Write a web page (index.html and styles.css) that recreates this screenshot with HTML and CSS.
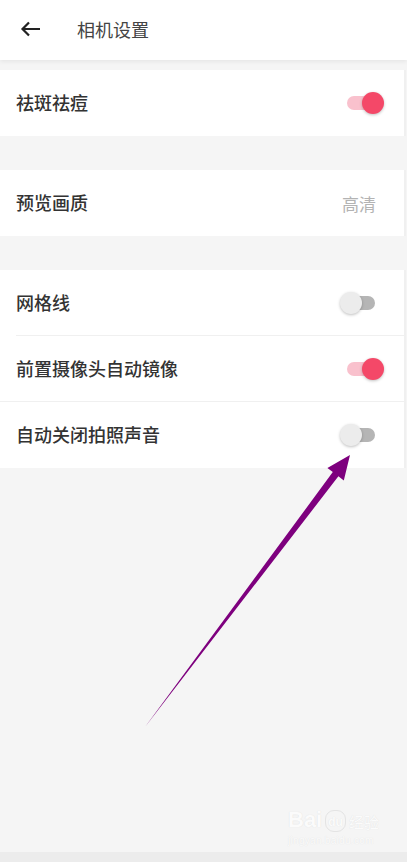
FILE: index.html
```html
<!DOCTYPE html>
<html lang="zh-CN">
<head>
    <meta charset="UTF-8">
    <meta name="viewport" content="width=device-width, initial-scale=1.0">
    <title>相机设置</title>
    <link rel="stylesheet" href="styles.css">
</head>
<body>
    <div class="page">
        <header class="top-bar">
            <svg class="back" width="22" height="22" viewBox="0 0 22 22">
                <path d="M20 11H3M9 4.5L2.5 11 9 17.5" fill="none" stroke="#222" stroke-width="2.2"/>
            </svg>
            <span class="title">相机设置</span>
        </header>

        <section class="group first">
            <div class="row">
                <span class="label">祛斑祛痘</span>
                <span class="switch on"><span class="track"></span><span class="knob"></span></span>
            </div>
        </section>

        <section class="group">
            <div class="row">
                <span class="label">预览画质</span>
                <span class="value">高清</span>
            </div>
        </section>

        <section class="group">
            <div class="row inset-line">
                <span class="label">网格线</span>
                <span class="switch"><span class="track"></span><span class="knob"></span></span>
            </div>
            <div class="row full-line">
                <span class="label">前置摄像头自动镜像</span>
                <span class="switch on"><span class="track"></span><span class="knob"></span></span>
            </div>
            <div class="row">
                <span class="label">自动关闭拍照声音</span>
                <span class="switch"><span class="track"></span><span class="knob"></span></span>
            </div>
        </section>

        <div class="spacer"></div>
        <div class="bottom-band"></div>

        <!-- annotation arrow drawn over the page -->
        <svg class="pointer" width="407" height="862" viewBox="0 0 407 862">
            <polygon points="145,727 332.8,472.1 327.4,468 350,455 343.8,480.4 338.4,476.3" fill="#7e007e"/>
        </svg>

        <div class="watermark">
            <div class="wm-top">
                <span class="wm-bai">Bai</span>
                <span class="wm-paw">du</span>
                <span class="wm-cn">经验</span>
            </div>
            <div class="wm-url">jingyan.baidu.com</div>
        </div>
    </div>
</body>
</html>
```

FILE: styles.css
```css
body {
    margin: 0;
    background-color: #f5f5f5;
    font-family: "Noto Sans CJK SC", "Noto Sans", sans-serif;
    color: #333;
}

.page {
    position: relative;
    width: 407px;
    height: 862px;
    display: flex;
    flex-direction: column;
    overflow: hidden;
}

.top-bar {
    height: 60px;
    flex-shrink: 0;
    background-color: #fff;
    display: flex;
    align-items: center;
    padding-left: 20px;
    box-shadow: 0 2px 4px rgba(0, 0, 0, 0.06);
    position: relative;
    z-index: 1;
}

.top-bar .back {
    margin-top: -3px;
}

.top-bar .title {
    margin-left: 35px;
    margin-top: -3px;
    font-size: 18px;
    color: #444;
}

.group {
    background-color: #fff;
    margin-top: 34px;
    border-right: 2px solid #f0f0f0;
    margin-right: 1px;
}

.group.first {
    margin-top: 10px;
}

.row {
    height: 66px;
    display: flex;
    align-items: center;
    justify-content: space-between;
    padding: 0 20px 0 16px;
    box-sizing: border-box;
    position: relative;
}

.row.inset-line::after,
.row.full-line::after {
    content: "";
    position: absolute;
    bottom: 0;
    right: 0;
    height: 1px;
    background-color: #f0f0f0;
}

.row.inset-line::after {
    left: 16px;
}

.row.full-line::after {
    left: 0;
}

.label {
    font-size: 18px;
    font-weight: 500;
    color: #333;
    margin-top: -2px;
}

.value {
    font-size: 17px;
    color: #b3b3b3;
    margin-right: 8px;
}

.switch {
    position: relative;
    width: 44px;
    height: 24px;
}

.switch .track {
    position: absolute;
    left: 3px;
    right: 9px;
    top: 5px;
    height: 14px;
    border-radius: 7px;
    background-color: #b5b5b5;
}

.switch .knob {
    position: absolute;
    left: 0;
    top: 1px;
    width: 22px;
    height: 22px;
    border-radius: 50%;
    background-color: #ececec;
    box-shadow: 0 1px 3px rgba(0, 0, 0, 0.25);
}

.switch.on .track {
    left: 7px;
    right: 3px;
    background-color: #f9c1cd;
}

.switch.on .knob {
    left: auto;
    right: 0;
    background-color: #f44868;
}

.spacer {
    flex: 1;
}

.bottom-band {
    height: 10px;
    background-color: #ececec;
}

.pointer {
    position: absolute;
    left: 0;
    top: 0;
}

.watermark {
    position: absolute;
    left: 288px;
    top: 808px;
    color: #fbfbfb;
    text-shadow: 0 0 1px #dcdcdc;
    font-family: "Liberation Sans", sans-serif;
}

.wm-top {
    display: flex;
    align-items: flex-end;
    gap: 3px;
}

.wm-bai {
    font-size: 22px;
    font-weight: bold;
    line-height: 24px;
}

.wm-paw {
    font-size: 12px;
    font-weight: bold;
    line-height: 14px;
    padding: 4px 2px 2px;
    border-radius: 9px;
    border: 1px solid #e4e4e4;
}

.wm-cn {
    font-family: "Noto Sans CJK SC", sans-serif;
    font-size: 15px;
    line-height: 20px;
}

.wm-url {
    font-size: 10px;
    margin-top: 3px;
    letter-spacing: 0.3px;
}
```
